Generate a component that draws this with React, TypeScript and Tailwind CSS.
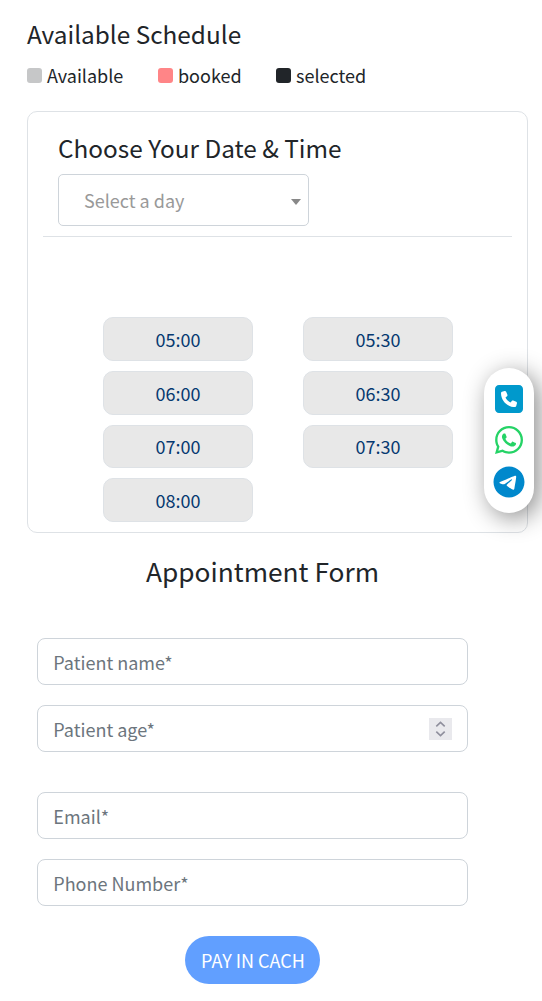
import { FaSquarePhone, FaTelegram, FaWhatsapp } from 'react-icons/fa6';

const legend = [
  { label: 'Available', color: 'bg-[#c6c7c8]', width: 'w-[131px]' },
  { label: 'booked', color: 'bg-[#ff8587]', width: 'w-[118px]' },
  { label: 'selected', color: 'bg-[#212529]', width: 'w-[100px]' },
];

const slots = ['05:00', '05:30', '06:00', '06:30', '07:00', '07:30', '08:00'];

function Field({ placeholder, stepper = false }: { placeholder: string; stepper?: boolean }) {
  return (
    <div className="flex h-[47px] items-center rounded-lg border border-[#ced4da] bg-white pr-[15px] pl-[15.3px]">
      <input
        type="text"
        placeholder={placeholder}
        className="h-[28px] min-w-0 flex-1 bg-transparent pt-px text-[18px] leading-[27px] outline-none placeholder:text-[#6c757d]"
      />
      {stepper && (
        <span className="flex h-[22px] w-[23px] items-center justify-center bg-[#e9e9ed]">
          <svg width="11" height="16" viewBox="0 0 11 16" fill="none" stroke="#8f8f9d" strokeWidth="1.6">
            <path d="M1.3 5.4 5.5 1.4 9.7 5.4M1.3 10.6 5.5 14.6 9.7 10.6" />
          </svg>
        </span>
      )}
    </div>
  );
}

export default function App() {
  return (
    <div className="relative h-[1001px] w-[542px] overflow-hidden bg-white font-['Noto_Sans_CJK_SC',sans-serif] text-[18px] leading-[27px] text-[#212529]">
      <header className="pt-[18px] pl-[27px]">
        <h2 className="text-[24.35px] leading-[31px]">Available Schedule</h2>
        <ul className="mt-[13px] flex">
          {legend.map((item) => (
            <li key={item.label} className={`flex items-center ${item.width}`}>
              <span className={`size-[15px] shrink-0 rounded-[3px] ${item.color}`} />
              <span className="ml-[5px]">{item.label}</span>
            </li>
          ))}
        </ul>
      </header>

      <section className="mt-[22px] ml-[27px] h-[422px] w-[501px] rounded-[10px] border border-[#dee2e6]">
        <div className="pt-5 pl-[30px]">
          <h2 className="text-[24.35px] leading-[31px]">Choose Your Date &amp; Time</h2>
          <button className="mt-[11px] flex h-[52px] w-[251px] items-center justify-between rounded-[5px] border border-[#ced4da] pr-[7px] pl-[25px] text-[#999999]">
            <span>Select a day</span>
            <svg className="mt-[3px]" width="10" height="6" viewBox="0 0 10 6" fill="#888888">
              <path d="M0 0h10L5 6z" />
            </svg>
          </button>
        </div>
        <hr className="mt-[10px] mr-[15px] ml-[15px] border-[#dee2e6]" />
        <div className="mt-[80.3px] ml-[75px] grid w-[350px] grid-cols-2 gap-x-[50px] gap-y-[10px]">
          {slots.map((slot) => (
            <button
              key={slot}
              className="h-[43.7px] rounded-[10px] border border-[#dee2e6] bg-[#e8e8e8] pt-[0.8px] text-[#063970]"
            >
              {slot}
            </button>
          ))}
        </div>
      </section>

      <h2 className="mt-[21px] w-[525px] text-center text-[26.3px] leading-[34px]">Appointment Form</h2>
      <form className="mt-[50px] ml-[37px] flex w-[431px] flex-col">
        <div className="flex flex-col gap-5">
          <Field placeholder="Patient name*" />
          <Field placeholder="Patient age*" stepper />
        </div>
        <div className="mt-10 flex flex-col gap-5">
          <Field placeholder="Email*" />
          <Field placeholder="Phone Number*" />
        </div>
        <button type="button" className="mt-[30px] h-12 w-[135px] self-center rounded-3xl bg-[#619fff] pl-px text-white">
          PAY IN CACH
        </button>
      </form>

      <aside className="absolute top-[368px] left-[484px] flex h-[145px] w-[50px] flex-col items-center rounded-[25px] bg-white pt-[15px] shadow-[5px_5px_25px_rgba(0,0,0,0.45)]">
        <FaSquarePhone size={32} color="#0099cc" />
        <FaWhatsapp size={32} color="#25d366" className="mt-[9px]" />
        <FaTelegram size={32} color="#0088cc" className="mt-[10px]" />
      </aside>
    </div>
  );
}
